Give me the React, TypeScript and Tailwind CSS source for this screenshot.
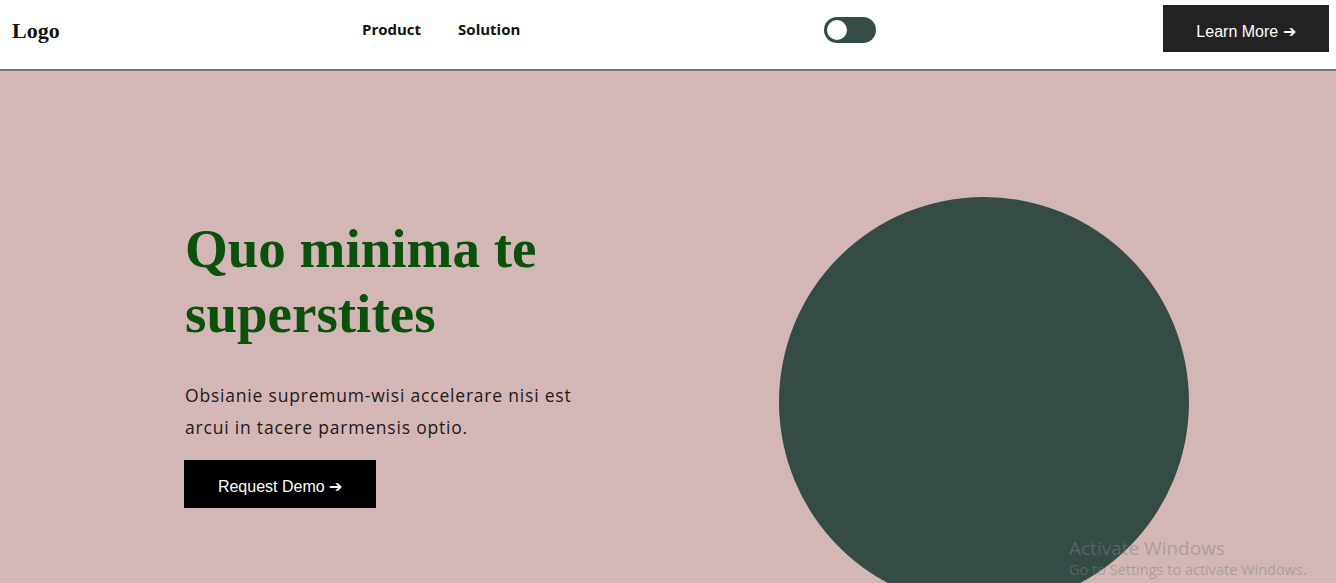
import { useState } from 'react'

const serif = "font-['Liberation_Serif','Times_New_Roman',serif]"

function Toggle() {
  const [on, setOn] = useState(false)
  return (
    <button
      onClick={() => setOn(!on)}
      className="flex h-[26px] w-[52px] items-center rounded-full bg-[#344b46] px-[3px]"
    >
      <span
        className={`block h-[20px] w-[20px] rounded-full bg-white transition-transform ${
          on ? 'translate-x-[26px]' : 'translate-x-0'
        }`}
      />
    </button>
  )
}

function Header() {
  return (
    <header className="flex h-[71px] items-center border-b-2 border-[#7b7b7b] bg-white">
      <div className="w-[362px] pb-[8px] pl-3">
        <span className={`${serif} text-[22px] font-bold text-[#111]`}>Logo</span>
      </div>
      <nav className="flex w-[462px] items-center gap-[37px] pb-[11px] font-['Open_Sans',sans-serif] text-[15px] font-bold text-[#111]">
        <a href="#">Product</a>
        <a href="#">Solution</a>
      </nav>
      <div className="w-[339px] pb-[9px]">
        <Toggle />
      </div>
      <button className="mb-[12px] h-[47px] w-[166px] bg-[#222] pt-[6px] font-['Liberation_Sans',Arial,sans-serif] text-[16px] text-white">
        Learn More ➔
      </button>
    </header>
  )
}

function Hero() {
  return (
    <section className="relative flex h-[512px] overflow-hidden bg-[#d3b7b7]">
      <div className="w-[779px] pl-[185px] pt-[145px]">
        <h1
          className={`${serif} text-[55px] font-bold leading-[65px] text-[#0b500b]`}
        >
          Quo minima te
          <br />
          superstites
        </h1>
        <p className="mt-[33px] w-[400px] font-['Open_Sans',sans-serif] text-[17.5px] leading-[32px] tracking-[0.8px] text-[#1e1a1a]">
          Obsianie supremum-wisi accelerare nisi est arcui in tacere parmensis optio.
        </p>
        <button className="mt-[17px] ml-[-1px] h-[48px] w-[192px] bg-black pt-[6px] font-['Liberation_Sans',Arial,sans-serif] text-[16px] text-white">
          Request Demo ➔
        </button>
      </div>
      <div className="pt-[126px]">
        <div className="h-[410px] w-[410px] rounded-full bg-[#344b46]" />
      </div>
      <div className="pointer-events-none absolute left-[1069px] top-[465px] font-['Open_Sans',sans-serif] text-[rgba(128,128,128,0.5)]">
        <div className="text-[19px] leading-[24px]">Activate Windows</div>
        <div className="text-[14.5px] leading-[20px]">Go to Settings to activate Windows.</div>
      </div>
    </section>
  )
}

export default function App() {
  return (
    <div className="h-[583px] w-full overflow-hidden bg-white">
      <Header />
      <Hero />
    </div>
  )
}
